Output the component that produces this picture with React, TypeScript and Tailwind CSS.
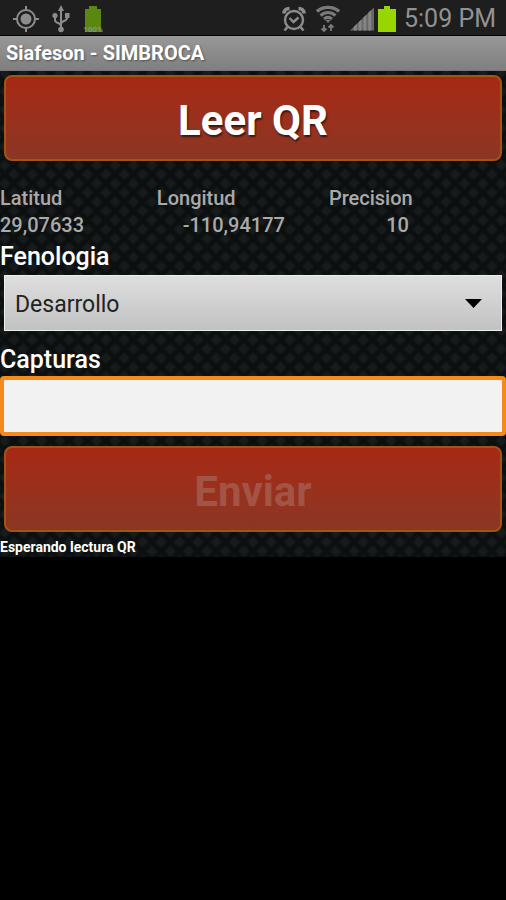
import React from "react";

const shadow = "[text-shadow:1px_2px_2px_rgba(0,0,0,0.6)]";

function GpsIcon() {
  return (
    <svg width="28" height="28" viewBox="0 0 28 28" fill="none" stroke="#8c8c8c" strokeWidth="2" aria-hidden="true">
      <circle cx="14" cy="14" r="9" />
      <circle cx="14" cy="14" r="5.5" fill="#8c8c8c" stroke="none" />
      <path d="M14 1v5M14 22v5M1 14h5M22 14h5" />
    </svg>
  );
}

function UsbIcon() {
  return (
    <svg width="18" height="28" viewBox="0 0 18 28" fill="none" stroke="#8c8c8c" strokeWidth="2" aria-hidden="true">
      <path d="M9 4v20M9 21c0-4-6-2-6-6v-4M9 19c0-4 6-2 6-6v-2" />
      <path d="M9 0l3 6H6z" fill="#8c8c8c" stroke="none" />
      <circle cx="9" cy="24.500" r="2.800" fill="#8c8c8c" stroke="none" />
      <circle cx="3" cy="10.500" r="2.600" fill="#8c8c8c" stroke="none" />
      <path d="M13 8h4.500v5H13z" fill="#8c8c8c" stroke="none" />
    </svg>
  );
}

function AlarmIcon() {
  return (
    <svg width="24" height="26" viewBox="1 0 24 26" fill="none" stroke="#8c8c8c" aria-hidden="true">
      <circle cx="13" cy="14" r="9" strokeWidth="2.400" />
      <path d="M8.500 12l4 4 5-4.500" strokeWidth="2.400" />
      <path d="M3 7.500C3 4.500 5 2.500 8.500 2.500M23 7.500c0-3-2-5-5.500-5" strokeWidth="3.600" />
      <path d="M6.500 21l-3 3.500M19.500 21l3 3.500" strokeWidth="2.600" />
    </svg>
  );
}

function WifiIcon() {
  return (
    <svg width="24" height="28" viewBox="0 0 24 28" fill="none" stroke="#7a7a7a" aria-hidden="true">
      <path d="M1 6.500c6-5.500 16-5.500 22 0" strokeWidth="3.400" />
      <path d="M4.500 10.500c4.500-4 10.500-4 15 0" strokeWidth="3.200" />
      <path d="M8 14c2.500-2 5.500-2 8 0" strokeWidth="3" />
      <path d="M9.500 15h5L12 18z" fill="#7a7a7a" stroke="none" />
      <path d="M8 20v6M5.500 23.500L8 26l2.500-2.500M15 26v-6M12.500 22.500L15 20l2.500 2.500" strokeWidth="1.800" />
    </svg>
  );
}

function SignalIcon() {
  return (
    <svg width="24" height="24" viewBox="0 0 25 24" aria-hidden="true">
      <path d="M0 24L25 0v24z" fill="#686868" />
      <path d="M4 24v-4l3-3v7zM9 24v-8.500l3-3V24zM14 24V10.500l3-3V24zM19 24V5.500l3-3V24z" fill="#858585" />
    </svg>
  );
}

function StatusBar() {
  return (
    <header className="flex h-9 items-center justify-between border-b border-black bg-[#1e1e1e] pt-0.5 pr-2.5 pl-3">
      <div className="flex items-center gap-3">
        <GpsIcon />
        <UsbIcon />
        <svg width="22" height="28" viewBox="0 0 22 28" aria-hidden="true">
          <path d="M7 1h8v3h4v23H3V4h4z" fill="#5b8710" />
          <text x="11" y="27" textAnchor="middle" fontSize="8" fontWeight="bold" fontFamily="Roboto, sans-serif" fill="#8b9480">
            100%
          </text>
        </svg>
      </div>
      <div className="flex items-center gap-2">
        <div className="flex items-center gap-2.5">
          <AlarmIcon />
          <WifiIcon />
          <SignalIcon />
        </div>
        <div className="flex items-center gap-2">
          <svg className="-ml-1" width="18" height="28" viewBox="0 0 18 28" aria-hidden="true">
            <path d="M6 1h6v3h6v23H0V4h6z" fill="#99d500" />
          </svg>
          <span className="text-[25px] leading-8 text-[#929292]">5:09 PM</span>
        </div>
      </div>
    </header>
  );
}

function ActionButton({ label, disabled = false }: { label: string; disabled?: boolean }) {
  return (
    <button
      type="button"
      disabled={disabled}
      className={`mx-1 h-[86px] rounded-lg border-2 border-[#a15413] bg-linear-to-b from-[#a72813] to-[#8b3624] pt-1 text-[42px] font-bold ${
        disabled ? "text-[#a35444]" : `text-white ${shadow}`
      }`}
    >
      {label}
    </button>
  );
}

export default function App() {
  return (
    <div className="min-h-screen bg-black font-[Roboto,sans-serif]">
      <StatusBar />
      <h1 className="h-[35px] border-b border-[#777] bg-linear-to-b from-[#989898] to-[#7f7f7f] pl-1.5 text-[20px] leading-[35px] font-bold text-white [text-shadow:1px_1px_2px_rgba(0,0,0,0.4)]">
        Siafeson - SIMBROCA
      </h1>
      <main className="flex flex-col bg-[#181b1b] bg-[repeating-linear-gradient(45deg,#0c0f0f_0_2px,transparent_5px_10px,#0c0f0f_13px),repeating-linear-gradient(-45deg,#0c0f0f_0_2px,transparent_5px_10px,#0c0f0f_13px)] pt-1">
        <ActionButton label="Leer QR" />
        <table className="mt-6 w-full table-fixed text-left text-[20px] leading-[27px] text-[#aaa]">
          <thead>
            <tr>
              <th className="w-[31%] font-medium">Latitud</th>
              <th className="w-[34%] font-medium">Longitud</th>
              <th className="font-medium">Precision</th>
            </tr>
          </thead>
          <tbody className="font-medium">
            <tr>
              <td>29,07633</td>
              <td className="pr-11 text-right">-110,94177</td>
              <td>
                <span className="inline-block w-20 text-right">10</span>
              </td>
            </tr>
          </tbody>
        </table>
        <label htmlFor="fenologia" className="text-[25px] leading-9 font-medium text-white">
          Fenologia
        </label>
        <div className="mx-1 grid items-center">
          <select
            id="fenologia"
            className="col-start-1 row-start-1 h-14 w-full appearance-none border border-[#eee] bg-linear-to-b from-[#dedede] to-[#c2c2c2] pt-1 pl-2.5 text-[23px] text-[#222]"
          >
            <option>Desarrollo</option>
          </select>
          <svg className="pointer-events-none col-start-1 row-start-1 mr-5 justify-self-end" width="17" height="9" viewBox="0 0 17 9" aria-hidden="true">
            <path d="M0 0h17L8.500 9z" fill="#000" />
          </svg>
        </div>
        <label htmlFor="capturas" className="mt-3 text-[25px] leading-[33px] font-medium text-white">
          Capturas
        </label>
        <input
          id="capturas"
          type="text"
          className="mb-2.5 h-[60px] w-full rounded-sm border-4 border-[#f58a1c] bg-[#f2f2f2] px-2 text-[23px] text-[#222] outline-none"
        />
        <ActionButton label="Enviar" disabled />
        <p className="pt-1.5 text-[14px] leading-[19px] font-bold text-white">Esperando lectura QR</p>
      </main>
    </div>
  );
}
